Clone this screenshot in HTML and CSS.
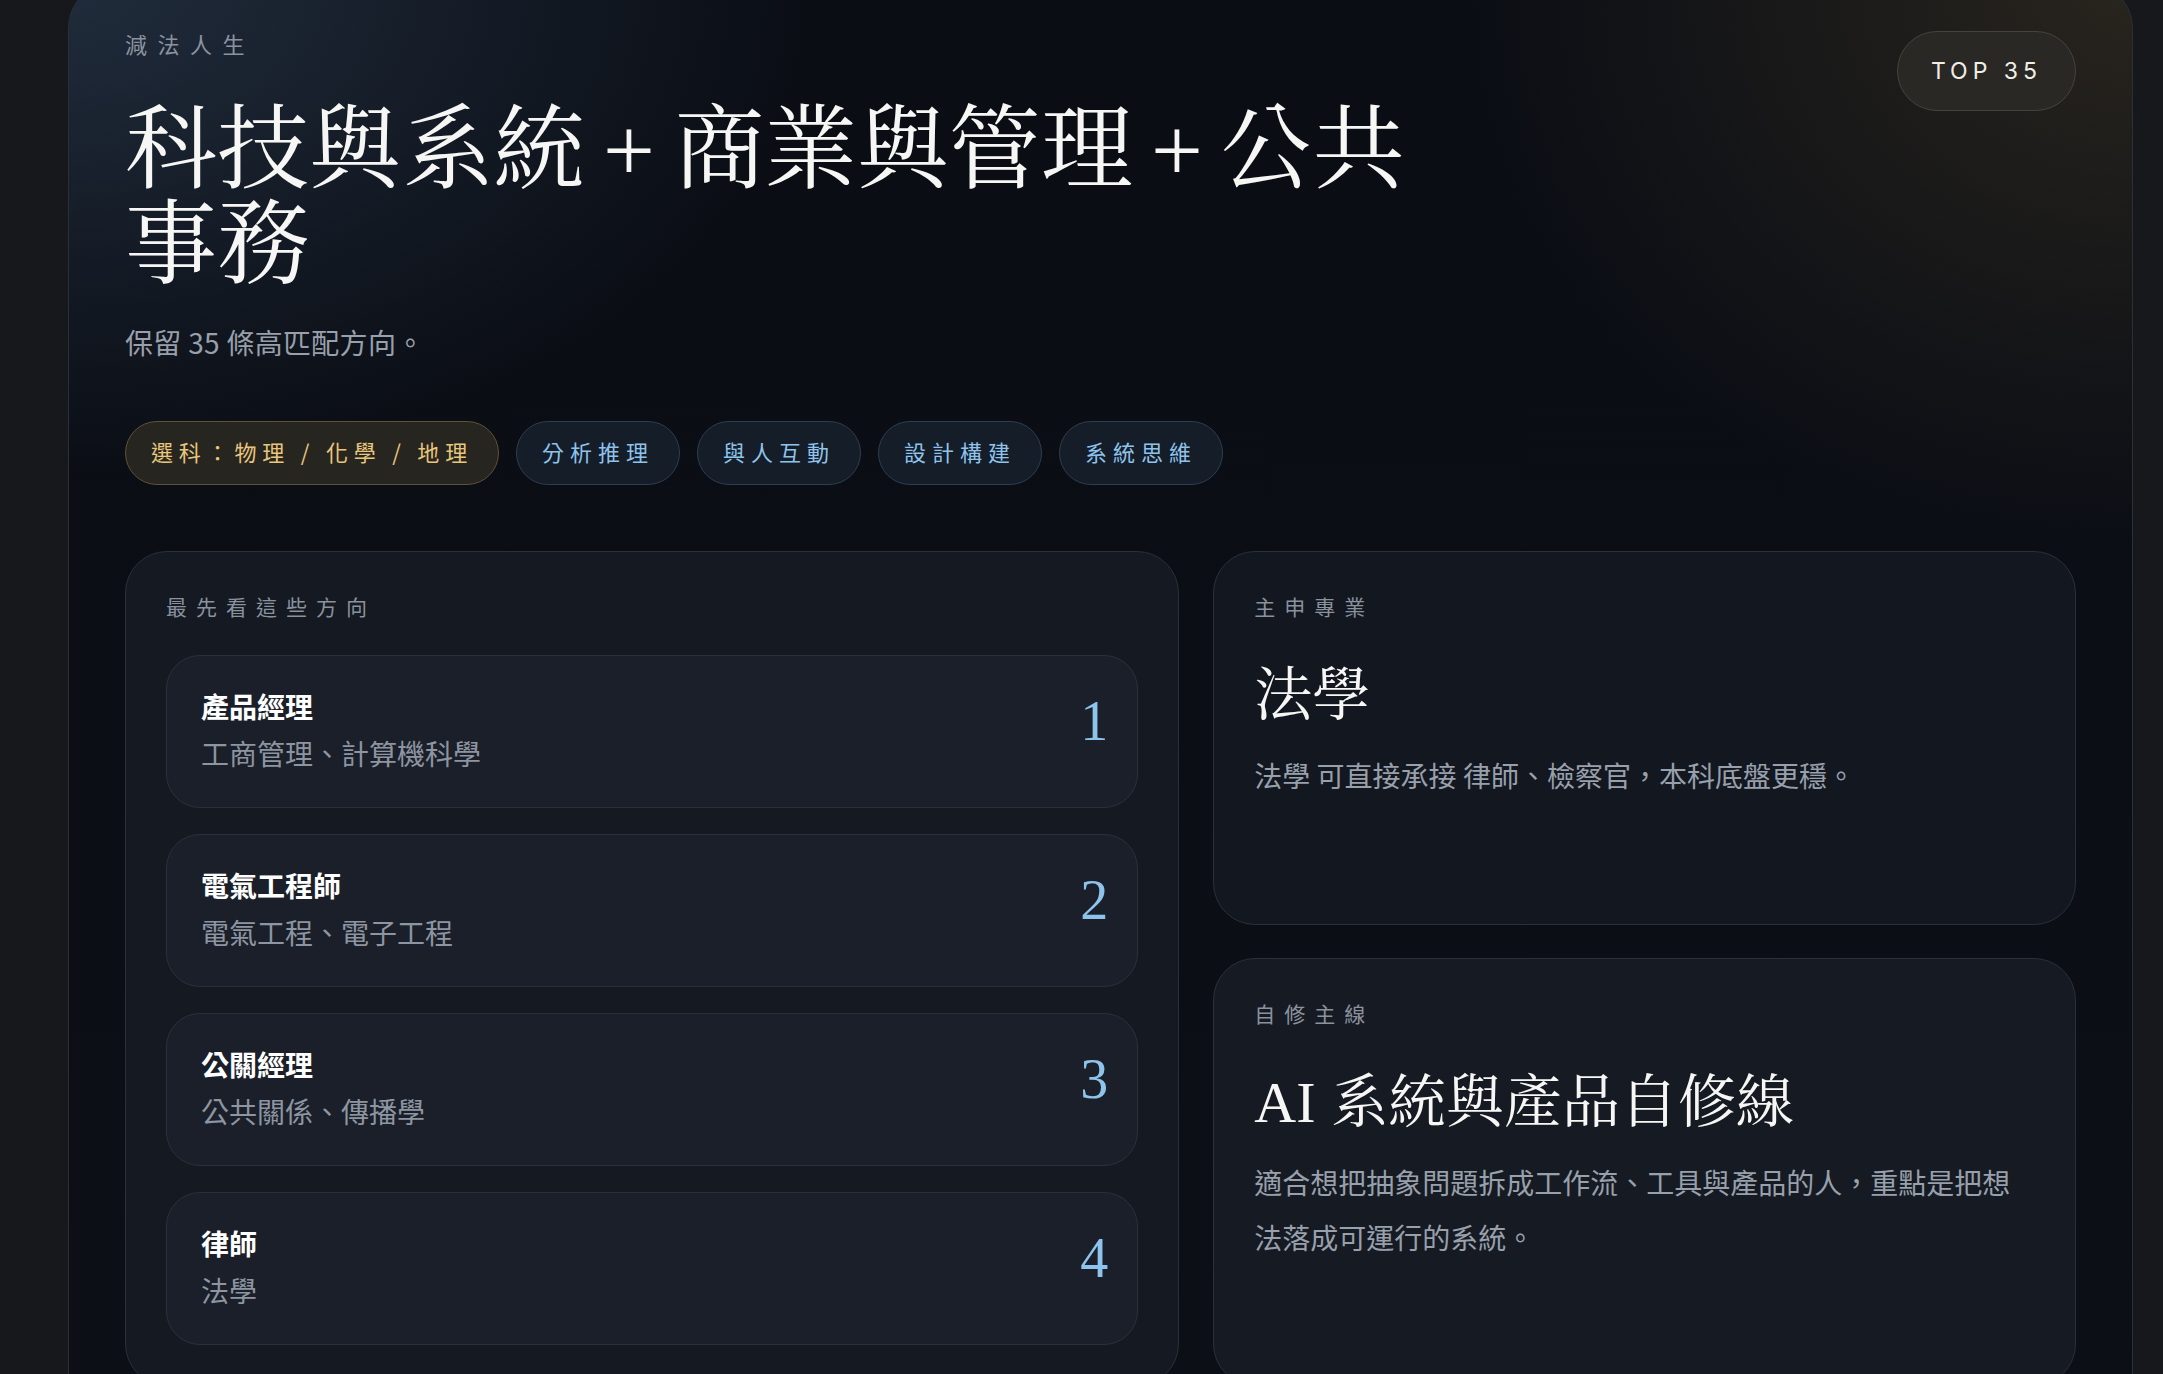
FILE: index.html
```html
<!DOCTYPE html>
<html lang="zh-Hant">
<head>
<meta charset="utf-8">
<title>減法人生</title>
<link rel="stylesheet" href="styles.css">
</head>
<body>
<main class="card">
  <header class="hero">
    <div class="hero-text">
      <div class="eyebrow">減法人生</div>
      <h1 class="title">科技與系統 + 商業與管理 + 公共事務</h1>
      <p class="lead">保留 35 條高匹配方向。</p>
    </div>
    <div class="badge">TOP 35</div>
  </header>

  <div class="chips">
    <span class="chip chip-gold">選科：物理 / 化學 / 地理</span>
    <span class="chip">分析推理</span>
    <span class="chip">與人互動</span>
    <span class="chip">設計構建</span>
    <span class="chip">系統思維</span>
  </div>

  <section class="grid">
    <div class="panel list-panel">
      <div class="panel-label">最先看這些方向</div>
      <ol class="items">
        <li class="item">
          <div class="item-text">
            <div class="item-title">產品經理</div>
            <div class="item-sub">工商管理、計算機科學</div>
          </div>
          <span class="item-num">1</span>
        </li>
        <li class="item">
          <div class="item-text">
            <div class="item-title">電氣工程師</div>
            <div class="item-sub">電氣工程、電子工程</div>
          </div>
          <span class="item-num">2</span>
        </li>
        <li class="item">
          <div class="item-text">
            <div class="item-title">公關經理</div>
            <div class="item-sub">公共關係、傳播學</div>
          </div>
          <span class="item-num">3</span>
        </li>
        <li class="item">
          <div class="item-text">
            <div class="item-title">律師</div>
            <div class="item-sub">法學</div>
          </div>
          <span class="item-num">4</span>
        </li>
      </ol>
    </div>

    <div class="side">
      <div class="panel info">
        <div class="panel-label">主申專業</div>
        <h2 class="info-title">法學</h2>
        <p class="info-desc">法學 可直接承接 律師、檢察官，本科底盤更穩。</p>
      </div>
      <div class="panel info info-alt">
        <div class="panel-label">自修主線</div>
        <h2 class="info-title">AI 系統與產品自修線</h2>
        <p class="info-desc">適合想把抽象問題拆成工作流、工具與產品的人，重點是把想法落成可運行的系統。</p>
      </div>
    </div>
  </section>
</main>
</body>
</html>
```

FILE: styles.css
```css
* { box-sizing: border-box; }

html, body {
  margin: 0;
  padding: 0;
}

body {
  background: #17181b;
  font-family: "Noto Sans CJK TC", "Noto Sans", sans-serif;
  color: #f3f3f1;
  overflow: hidden;
  height: 1374px;
}

.card {
  margin: -18px 30px 0 68px;
  border: 1px solid #2a2f38;
  border-radius: 46px;
  padding: 44px 56px 40px;
  background:
    radial-gradient(ellipse 1000px 650px at 0% 0%, rgba(38, 52, 70, 0.8), rgba(38, 52, 70, 0) 75%),
    radial-gradient(ellipse 900px 750px at 100% 0%, rgba(46, 41, 32, 0.85), rgba(46, 41, 32, 0) 75%),
    linear-gradient(180deg, #0a0d14 0%, #0c0f16 100%);
}

.hero {
  display: flex;
  justify-content: space-between;
  align-items: flex-start;
}

.eyebrow {
  font-size: 22px;
  line-height: 33px;
  letter-spacing: 10.5px;
  color: #8b93a0;
}

.title {
  margin: 43px 0 0;
  max-width: 1340px;
  font-family: "Liberation Serif", "Noto Serif CJK TC", "Noto Serif TC", "Noto Sans CJK TC", serif;
  font-weight: 400;
  font-size: 92px;
  line-height: 95px;
  word-spacing: -5px;
  color: #f6f6f4;
}

.lead {
  margin: 28px 0 0;
  font-size: 28px;
  line-height: 42px;
  letter-spacing: 0.3px;
  color: #98a0ac;
}

.badge {
  margin-top: 4px;
  padding: 24px 33px;
  border: 1px solid #46433d;
  border-radius: 999px;
  background: #2a2824;
  font-family: "Inter", "Noto Sans", sans-serif;
  font-size: 23px;
  line-height: 30px;
  letter-spacing: 5px;
  color: #f1eee8;
  white-space: nowrap;
}

.chips {
  margin-top: 58px;
  display: flex;
  gap: 17px;
}

.chip {
  padding: 13px 25px 17px;
  border: 1px solid #2d3e4f;
  border-radius: 999px;
  background: #151d28;
  font-size: 22px;
  line-height: 32px;
  letter-spacing: 6px;
  color: #8ec4ec;
  white-space: nowrap;
}

.chip-gold {
  border-color: #5e5237;
  background: #27251f;
  color: #e7c67d;
  letter-spacing: 5.8px;
}

.grid {
  margin-top: 66px;
  display: grid;
  grid-template-columns: 11fr 9fr;
  gap: 34px;
  align-items: stretch;
}

.panel {
  border: 1px solid #2a303a;
  border-radius: 42px;
  padding: 38px 40px 40px;
  background: #141922;
}

.panel-label {
  font-size: 21px;
  line-height: 32px;
  letter-spacing: 9px;
  color: #8a929e;
}

.items {
  list-style: none;
  margin: 33px 0 0;
  padding: 0;
  display: flex;
  flex-direction: column;
  gap: 26px;
}

.item {
  display: flex;
  align-items: center;
  justify-content: space-between;
  padding: 31px 29px 34px 34px;
  border: 1px solid #2b313b;
  border-radius: 34px;
  background: #1a1f29;
}

.item-title {
  font-size: 28px;
  line-height: 39px;
  font-weight: 700;
  color: #ffffff;
}

.item-sub {
  margin-top: 8px;
  font-size: 28px;
  line-height: 39px;
  color: #8d95a1;
}

.item-num {
  margin-bottom: 18px;
  font-family: "Liberation Serif", serif;
  font-size: 56px;
  line-height: 1;
  color: #8ec4ec;
}

.side {
  display: flex;
  flex-direction: column;
  gap: 33px;
}

.info {
  flex: 1 0 auto;
  background: #131720;
}

.info-alt {
  background: #161a23;
}

.info-title {
  margin: 39px 0 0;
  font-family: "Liberation Serif", "Noto Serif CJK TC", "Noto Serif TC", "Noto Sans CJK TC", serif;
  font-weight: 400;
  font-size: 58px;
  line-height: 70px;
  color: #f6f6f4;
}

.info-desc {
  margin: 17px 0 0;
  font-size: 28px;
  line-height: 55px;
  color: #98a0ac;
}
```
